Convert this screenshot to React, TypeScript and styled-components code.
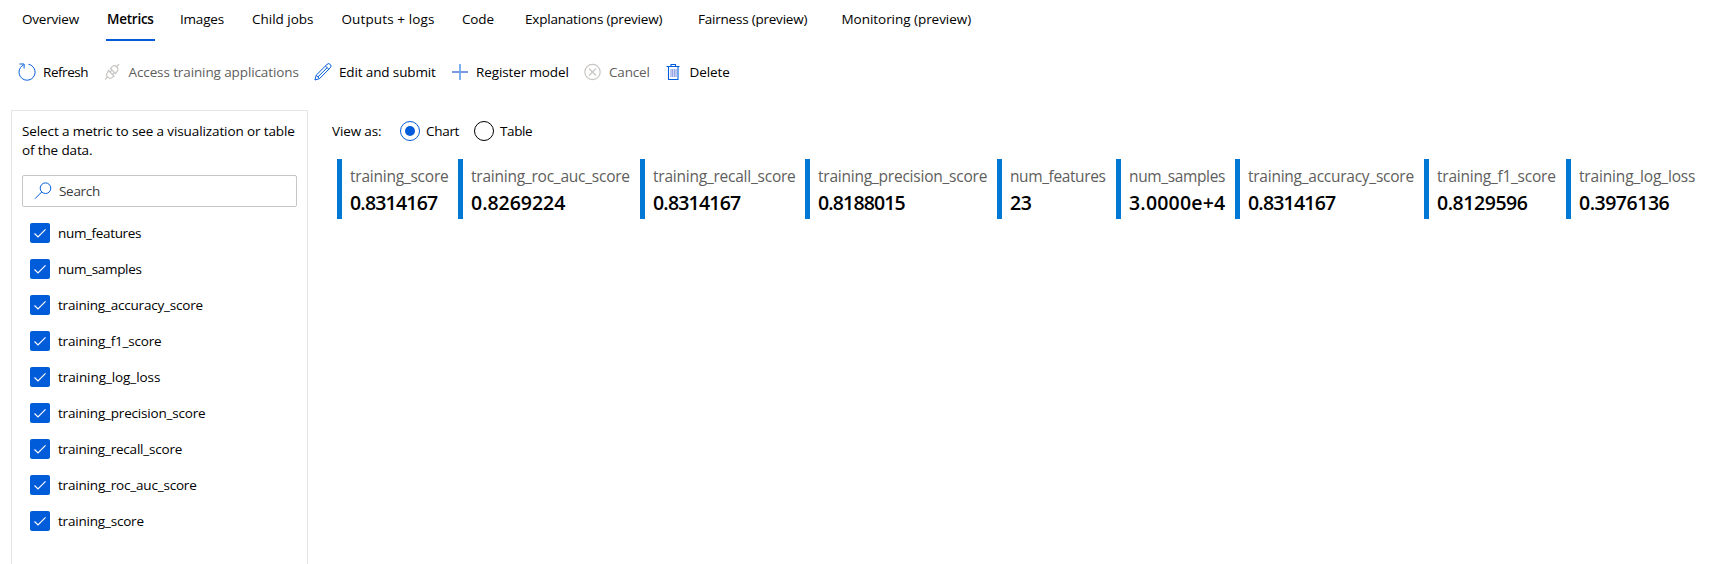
import React from 'react';
import styled, { createGlobalStyle } from 'styled-components';

const GlobalStyle = createGlobalStyle`
  * { box-sizing: border-box; }
  html, body { margin: 0; background: #fff; }
  body { height: 564px; overflow: hidden; font-family: "Open Sans", "Noto Sans", sans-serif; font-size: 13.5px; color: #000; }
`;

const Page = styled.div`
  width: 1722px;
  height: 564px;
  display: flex;
  flex-direction: column;
  overflow: hidden;
`;

const Label = styled.span<{ $track?: number }>`
  white-space: nowrap;
  letter-spacing: ${p => p.$track ?? 0}px;
`;

const TabBar = styled.nav`
  display: flex;
  height: 41px;
  padding-left: 22px;
`;

const TabSlot = styled.div<{ $width: number }>`
  width: ${p => p.$width}px;
  flex: none;
`;

const Tab = styled.div<{ $active?: boolean }>`
  display: inline-flex;
  height: 41px;
  line-height: 20px;
  padding-top: 9px;
  border-bottom: 2px solid ${p => (p.$active ? '#015cda' : 'transparent')};
  font-weight: ${p => (p.$active ? 600 : 400)};
  ${p => (p.$active ? 'width: 49px; padding-left: 1px;' : '')}
`;

const Toolbar = styled.div`
  display: flex;
  align-items: center;
  height: 20px;
  margin-top: 21px;
  padding-left: 18px;
`;

const Command = styled.div<{ $width: number; $gap: number; $disabled?: boolean }>`
  display: flex;
  align-items: center;
  gap: ${p => p.$gap}px;
  width: ${p => p.$width}px;
  flex: none;
  height: 20px;
  line-height: 20px;
  color: ${p => (p.$disabled ? '#605e5c' : '#000')};
`;

const Icon = styled.svg`
  display: block;
  width: 18px;
  height: 18px;
  flex: none;
  fill: none;
  overflow: visible;
`;

const Body = styled.div`
  display: flex;
  flex: 1;
  margin-top: 28px;
  padding-left: 11px;
`;

const Panel = styled.aside`
  width: 297px;
  height: 480px;
  flex: none;
  border: 1px solid #e6e6e6;
  padding: 11px 10px;
`;

const Hint = styled.p`
  display: flex;
  flex-direction: column;
  margin: 0;
  line-height: 19px;
`;

const SearchBox = styled.div`
  display: flex;
  align-items: center;
  gap: 6px;
  width: 275px;
  height: 32px;
  margin-top: 15px;
  padding-left: 12px;
  border: 1px solid #c8c6c4;
  border-radius: 2px;
  color: #3b3a39;
`;

const CheckList = styled.div`
  display: flex;
  flex-direction: column;
  gap: 16px;
  margin-top: 16px;
  padding-left: 8px;
`;

const CheckRow = styled.label`
  display: flex;
  align-items: center;
  gap: 8px;
  height: 20px;
  line-height: 20px;
`;

const CheckMark = styled.svg`
  width: 20px;
  height: 20px;
  flex: none;
  border-radius: 2px;
  background: #015cda;
  fill: none;
  stroke: #fff;
  stroke-width: 1.2;
`;

const Content = styled.main`
  flex: 1;
  min-width: 0;
  padding: 11px 0 0 24px;
`;

const ViewSwitch = styled.div`
  display: flex;
  align-items: center;
  height: 20px;
  line-height: 20px;
`;

const ViewCaption = styled.div`
  width: 68px;
`;

const Option = styled.label`
  display: flex;
  align-items: center;
  gap: 6px;
  width: 74px;
`;

const Radio = styled.span<{ $checked?: boolean }>`
  display: flex;
  align-items: center;
  justify-content: center;
  width: 20px;
  height: 20px;
  border: 1px solid ${p => (p.$checked ? '#015cda' : '#000')};
  border-radius: 50%;
  &::after {
    content: "";
    width: 10px;
    height: 10px;
    border-radius: 50%;
    background: ${p => (p.$checked ? '#015cda' : 'transparent')};
  }
`;

const Cards = styled.div`
  display: flex;
  margin: 18px 0 0 5px;
`;

const Card = styled.div<{ $width: number }>`
  display: flex;
  flex-direction: column;
  width: ${p => p.$width}px;
  height: 60px;
  flex: none;
  padding: 5px 0 0 8px;
  border-left: 5px solid #0078d4;
`;

const CardName = styled.div`
  height: 25px;
  line-height: 24px;
  font-size: 15.5px;
  color: #605e5c;
`;

const CardValue = styled.div`
  height: 28px;
  line-height: 28px;
  font-size: 19.5px;
  font-weight: 550;
`;

const tabs = [
  { text: 'Overview', width: 84, track: -0.2 },
  { text: 'Metrics', width: 74, track: -0.25, active: true },
  { text: 'Images', width: 72, track: -0.2 },
  { text: 'Child jobs', width: 89.5, track: -0.02 },
  { text: 'Outputs + logs', width: 120.5, track: 0.12 },
  { text: 'Code', width: 63, track: -0.13 },
  { text: 'Explanations (preview)', width: 173, track: -0.2 },
  { text: 'Fairness (preview)', width: 143.5, track: -0.22 },
  { text: 'Monitoring (preview)', width: 140, track: -0.04 },
];

const RefreshIcon = () => (
  <Icon viewBox="0 0 18 18" stroke="#015cda">
    <path d="M5.3 2.1A8 8 0 1 0 10.5 1.3M1.5 1h4.6v4.5" />
  </Icon>
);

const PlugIcon = () => (
  <Icon viewBox="0 0 18 18" stroke="#c8c6c4" strokeWidth="1.2">
    <path d="M1 16.500l3-3M12 4.500l3-3.500M4.500 7.500l5.500 5.500-1.500 1.200a3.200 3.200 0 0 1-4.800-4.800zM6.500 5.500l1.500-1.700a3.200 3.200 0 0 1 4.800 4.800L11.500 10.500zM6 9l2-2.200M8.500 11.500l2-2.200" />
  </Icon>
);

const PencilIcon = () => (
  <Icon viewBox="0 0 18 18" stroke="#015cda">
    <path d="M1 17l1.200-4.800L13 1.400a2.200 2.200 0 0 1 3.300 3.300L5.600 15.600zM11.500 3l3.300 3.300M2.200 12.200l3.400 3.400M4 13.800L13.200 4.700" />
  </Icon>
);

const PlusIcon = () => (
  <Icon viewBox="0 0 18 18">
    <path d="M0 9h16" stroke="#7a98e6" strokeWidth="2" />
    <path d="M8 1v16" stroke="#6fa8ee" strokeWidth="1.800" />
  </Icon>
);

const CancelIcon = () => (
  <Icon viewBox="0 0 18 18" stroke="#c8c6c4" strokeWidth="1.200">
    <circle cx="8.500" cy="9" r="7.700" />
    <path d="M5 5.500l7 7M12 5.500l-7 7" />
  </Icon>
);

const TrashIcon = () => (
  <Icon viewBox="0 0 18 18" stroke="#015cda">
    <path d="M-0.500 3.500h13M4 3.500v-2h4.500v2M1.500 3.500v13h9.500v-13" strokeWidth="1.100" />
    <path d="M4 6v8M5.700 6v8M7.300 6v8M9 6v8" stroke="#7d8fe0" />
  </Icon>
);

const SearchIcon = () => (
  <Icon viewBox="0 0 18 18" stroke="#015cda">
    <circle cx="10.500" cy="6.200" r="5.300" />
    <path d="M6.700 10L0 16.700" />
  </Icon>
);

const commands = [
  { text: 'Refresh', icon: <RefreshIcon />, width: 86, gap: 7, track: -0.45 },
  { text: 'Access training applications', icon: <PlugIcon />, width: 210, gap: 6.5, track: -0.11, disabled: true },
  { text: 'Edit and submit', icon: <PencilIcon />, width: 138, gap: 7, track: -0.13 },
  { text: 'Register model', icon: <PlusIcon />, width: 132, gap: 6, track: -0.12 },
  { text: 'Cancel', icon: <CancelIcon />, width: 82.5, gap: 7, track: -0.17, disabled: true },
  { text: 'Delete', icon: <TrashIcon />, width: 80, gap: 5, track: -0.1 },
];

const metrics = [
  { name: 'num_features', track: -0.34 },
  { name: 'num_samples', track: -0.32 },
  { name: 'training_accuracy_score', track: -0.2 },
  { name: 'training_f1_score', track: -0.19 },
  { name: 'training_log_loss', track: -0.08 },
  { name: 'training_precision_score', track: -0.19 },
  { name: 'training_recall_score', track: -0.2 },
  { name: 'training_roc_auc_score', track: -0.19 },
  { name: 'training_score', track: -0.2 },
];

const cards = [
  { name: 'training_score', value: '0.8314167', width: 121, nt: -0.23, vt: -0.8 },
  { name: 'training_roc_auc_score', value: '0.8269224', width: 182, nt: -0.23, vt: -0.02 },
  { name: 'training_recall_score', value: '0.8314167', width: 165, nt: -0.23, vt: -0.8 },
  { name: 'training_precision_score', value: '0.8188015', width: 192, nt: -0.22, vt: -0.85 },
  { name: 'num_features', value: '23', width: 119, nt: -0.39, vt: -0.4 },
  { name: 'num_samples', value: '3.0000e+4', width: 119, nt: -0.36, vt: 0.2 },
  { name: 'training_accuracy_score', value: '0.8314167', width: 189, nt: -0.25, vt: -0.8 },
  { name: 'training_f1_score', value: '0.8129596', width: 142, nt: -0.23, vt: -0.45 },
  { name: 'training_log_loss', value: '0.3976136', width: 140, nt: -0.16, vt: -0.48 },
];

export default function App() {
  return (
    <Page>
      <GlobalStyle />
      <TabBar>
        {tabs.map(t => (
          <TabSlot key={t.text} $width={t.width}>
            <Tab $active={t.active}><Label $track={t.track}>{t.text}</Label></Tab>
          </TabSlot>
        ))}
      </TabBar>
      <Toolbar>
        {commands.map(c => (
          <Command key={c.text} $width={c.width} $gap={c.gap} $disabled={c.disabled}>
            {c.icon}
            <Label $track={c.track}>{c.text}</Label>
          </Command>
        ))}
      </Toolbar>
      <Body>
        <Panel>
          <Hint>
            <Label $track={-0.11}>Select a metric to see a visualization or table</Label>
            <Label $track={-0.13}>of the data.</Label>
          </Hint>
          <SearchBox>
            <SearchIcon />
            <Label $track={-0.3}>Search</Label>
          </SearchBox>
          <CheckList>
            {metrics.map(m => (
              <CheckRow key={m.name}>
                <CheckMark viewBox="0 0 20 20"><path d="M4.500 10.500l3.500 3.500 7.500-7.700" /></CheckMark>
                <Label $track={m.track}>{m.name}</Label>
              </CheckRow>
            ))}
          </CheckList>
        </Panel>
        <Content>
          <ViewSwitch>
            <ViewCaption><Label $track={-0.13}>View as:</Label></ViewCaption>
            <Option><Radio $checked /><Label $track={-0.3}>Chart</Label></Option>
            <Option><Radio /><Label $track={-0.4}>Table</Label></Option>
          </ViewSwitch>
          <Cards>
            {cards.map(c => (
              <Card key={c.name} $width={c.width}>
                <CardName><Label $track={c.nt}>{c.name}</Label></CardName>
                <CardValue><Label $track={c.vt}>{c.value}</Label></CardValue>
              </Card>
            ))}
          </Cards>
        </Content>
      </Body>
    </Page>
  );
}
